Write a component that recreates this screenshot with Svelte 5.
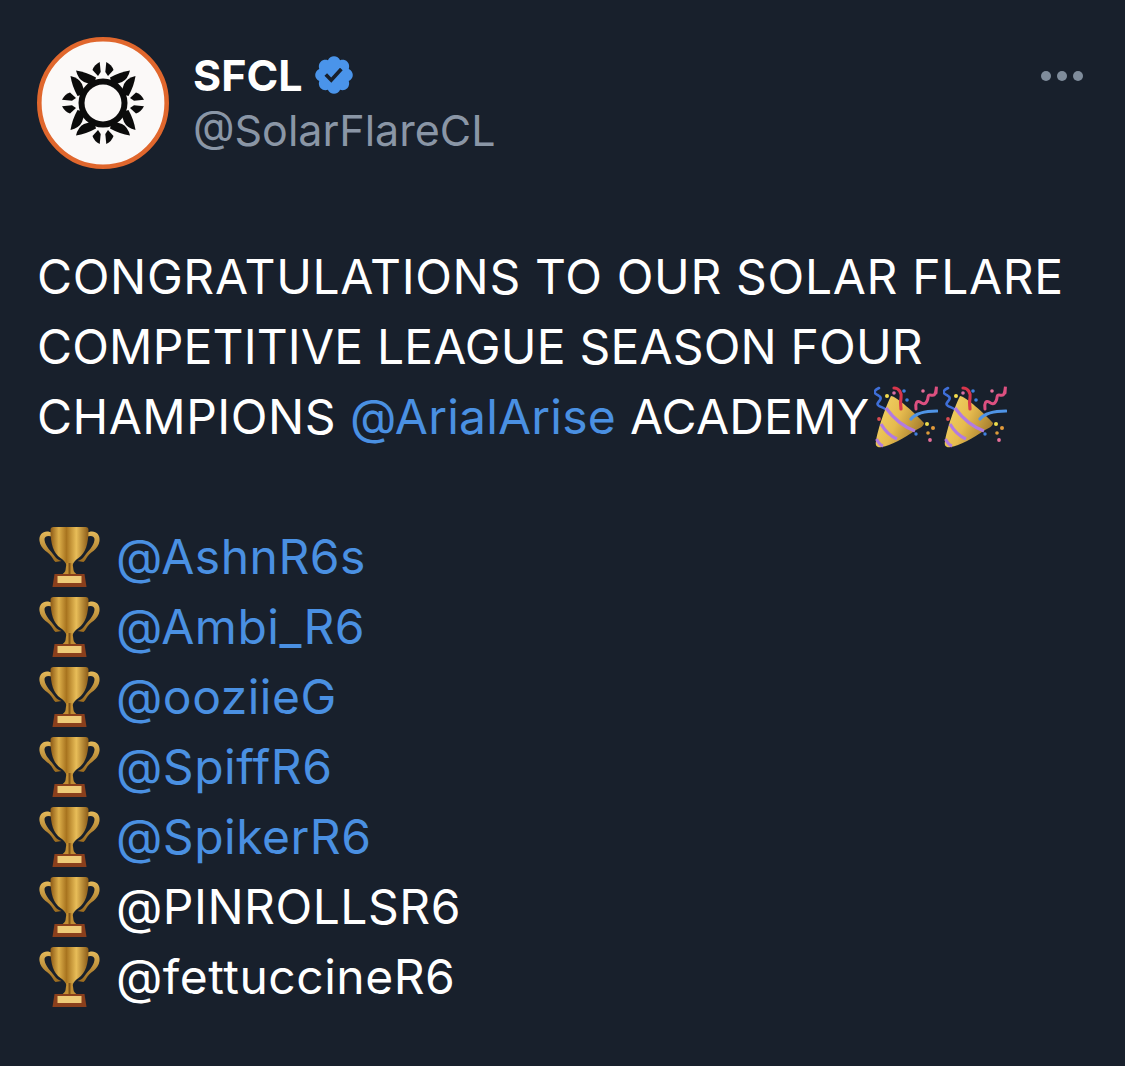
<script>
  const handles = [
    { t: '@AshnR6s', link: true },
    { t: '@Ambi_R6', link: true },
    { t: '@ooziieG', link: true },
    { t: '@SpiffR6', link: true },
    { t: '@SpikerR6', link: true },
    { t: '@PINROLLSR6', link: false },
    { t: '@fettuccineR6', link: false }
  ];
  const rot = [0, 90, 180, 270];
</script>

<svg class="defs" width="0" height="0" aria-hidden="true">
  <defs>
    <linearGradient id="gold" x1="0" x2="1" y1="0" y2="0">
      <stop offset="0" stop-color="#8d5a16" />
      <stop offset="0.22" stop-color="#dcae4a" />
      <stop offset="0.42" stop-color="#a8741f" />
      <stop offset="0.68" stop-color="#e8bd58" />
      <stop offset="1" stop-color="#8a5a18" />
    </linearGradient>
    <linearGradient id="handle" x1="0" x2="0" y1="0" y2="1">
      <stop offset="0" stop-color="#e4b95a" />
      <stop offset="1" stop-color="#9a6a1e" />
    </linearGradient>
    <linearGradient id="cone" x1="0" x2="1" y1="0" y2="0.5">
      <stop offset="0" stop-color="#f3d768" />
      <stop offset="0.55" stop-color="#e6bb4e" />
      <stop offset="1" stop-color="#a9812f" />
    </linearGradient>
    <symbol id="trophy" viewBox="0 0 64 64">
      <path d="M15 8C8 4 1 8 2 16c1 9 10 11 13 17 1 2 2 3 3 4l6-1c-3-1-5-2-7-5C13 25 8 22 7 15c-.5-4 4-5 8-3z" fill="url(#handle)" />
      <path d="M49 8c7-4 14 0 13 8-1 9-10 11-13 17-1 2-2 3-3 4l-6-1c3-1 5-2 7-5 4-6 9-9 10-16 .5-4-4-5-8-3z" fill="url(#handle)" />
      <path d="M16 2h32c2 0 3 1 3 3 0 14-3 23-10 28-3 2-5 4-6 7h-6c-1-3-3-5-6-7-7-5-10-14-10-28 0-2 1-3 3-3z" fill="url(#gold)" />
      <path d="M29 38h6l1 7c0 2 2 3 4 5H24c2-2 4-3 4-5z" fill="#c18d32" />
      <path d="M31 38h2v12h-2z" fill="#7f5217" />
      <path d="M17 49h30l2 13H15z" fill="#8a3f1c" />
      <path d="M20 51h24v7H20z" fill="#eecb78" />
    </symbol>
    <symbol id="popper" viewBox="0 0 64 64">
      <path d="M5 2C1 4-1 6 2 8s6 3 4 6-4 4-1 6 6 1 8 5" fill="none" stroke="#3f6fd8" stroke-width="2.6" stroke-linecap="round" />
      <path d="M17 10C22 10 42 28 50 37 50 40 46 42 42 44 30 52 16 60 8 61 3 62 1 60 2 55 4 42 12 20 17 10Z" fill="url(#cone)" />
      <path d="M12 22C20 33 30 41 41 45" fill="none" stroke="#b37be0" stroke-width="3.2" />
      <path d="M7 38C11 45 16 50 23 53" fill="none" stroke="#b37be0" stroke-width="3.2" />
      <path d="M2.5 53C4 56 6 59 9 60" fill="none" stroke="#b37be0" stroke-width="3" />
      <path d="M37 33C42 27 50 25 63 25" fill="none" stroke="#4f94e6" stroke-width="3.2" stroke-linecap="round" />
      <path d="M20 2C25 2 28 7 27 12s0 8 0 11" fill="none" stroke="#d9364c" stroke-width="3.2" stroke-linecap="round" />
      <path d="M42 23C41 17 43 14 46 16s5 3 7-1 0-6 3-6 5 2 6-5 0-1 0 3" fill="none" stroke="#dd5080" stroke-width="3" stroke-linecap="round" stroke-linejoin="round" />
      <circle cx="13" cy="10" r="2" fill="#f5dc4d" />
      <circle cx="20" cy="7" r="1.8" fill="#d86fa6" />
      <circle cx="30" cy="5" r="1.8" fill="#3f80e0" />
      <circle cx="33" cy="14" r="1.8" fill="#3f80e0" />
      <circle cx="49" cy="5" r="1.8" fill="#e76f9a" />
      <circle cx="5" cy="33" r="1.9" fill="#d94b52" />
      <circle cx="53" cy="38" r="2" fill="#ecdd4e" />
      <circle cx="59" cy="42" r="2" fill="#e39a3a" />
      <circle cx="42" cy="48" r="1.7" fill="#3f80e0" />
      <circle cx="54" cy="47" r="1.8" fill="#dc9c3a" />
      <circle cx="56" cy="54" r="1.9" fill="#e76f9a" />
    </symbol>
  </defs>
</svg>

<main class="tweet">
  <header class="head">
    <svg class="avatar" viewBox="-66 -66 132 132" aria-label="SFCL logo">
      <circle r="63.7" fill="#fbf9f8" stroke="#e0672d" stroke-width="4.6" />
      <g fill="#0b0b0b">
        <circle r="24.5" />
        {#each rot as r}
          <g transform="rotate({r})">
            <path d="M3.3-41Q9-38 10.5-33L5-27 2.3-31Z" />
            <path d="M-3.3-41Q-9-38-10.5-33L-5-27-2.3-31Z" />
            <path d="M7-25.5Q17-31 27-32.5 25-24 19-21 14-19 9-18.5Z" />
            <path d="M-7-25.5Q-17-31-27-32.5-25-24-19-21-14-19-9-18.5Z" />
          </g>
        {/each}
      </g>
      <circle r="18.5" fill="#fbf9f8" />
    </svg>
    <div class="who">
      <div class="name">SFCL
        <svg class="badge" viewBox="0 0 24 24"><path fill="#4a94ea" d="M22.25 12c0-1.43-.88-2.67-2.19-3.34.46-1.39.2-2.9-.81-3.91s-2.52-1.27-3.91-.81c-.66-1.31-1.91-2.19-3.34-2.19s-2.67.88-3.33 2.19c-1.4-.46-2.91-.2-3.92.81s-1.26 2.52-.8 3.91c-1.31.67-2.2 1.91-2.2 3.34s.89 2.67 2.2 3.34c-.46 1.39-.21 2.9.8 3.91s2.52 1.26 3.91.81c.67 1.31 1.91 2.19 3.34 2.19s2.68-.88 3.34-2.19c1.39.45 2.9.2 3.91-.81s1.27-2.52.81-3.91c1.31-.67 2.19-1.91 2.19-3.34zm-11.71 4.2L6.8 12.46l1.41-1.42 2.26 2.26 4.8-5.23 1.47 1.36-6.2 6.77z" /></svg>
      </div>
      <div class="handle">@SolarFlareCL</div>
    </div>
    <div class="more" aria-label="More"><i></i><i></i><i></i></div>
  </header>

  <section class="body">
    <p class="wide">CONGRATULATIONS TO OUR SOLAR FLARE</p>
    <p class="tight">COMPETITIVE LEAGUE SEASON FOUR</p>
    <p>CHAMPIONS <span class="link snug">@ArialArise</span> <span class="snug academy">ACADEMY</span><svg class="emoji party"><use href="#popper" /></svg><svg class="emoji party"><use href="#popper" /></svg></p>
    <p class="blank">&nbsp;</p>
    {#each handles as h}
      <p class="row"><svg class="emoji cup"><use href="#trophy" /></svg><span class:link={h.link}>{h.t}</span></p>
    {/each}
  </section>
</main>

<style>
  :global(body) {
    background: #18202c;
    margin: 0;
  }
  .defs {
    position: absolute;
  }
  .tweet {
    box-sizing: border-box;
    width: 1125px;
    height: 1066px;
    background: #18202c;
    padding: 37px 42px 0 37px;
    font-family: Inter, "Liberation Sans", sans-serif;
    color: #fff;
    overflow: hidden;
  }
  .head {
    display: flex;
    align-items: flex-start;
    height: 132px;
  }
  .avatar {
    width: 132px;
    height: 132px;
    flex: none;
  }
  .who {
    margin-left: 24px;
    padding-top: 8px;
    flex: 1;
  }
  .name {
    display: flex;
    align-items: center;
    gap: 9px;
    font-size: 43px;
    font-weight: 700;
    line-height: 60px;
  }
  .badge {
    width: 44px;
    height: 44px;
  }
  .handle {
    font-size: 43px;
    line-height: 50px;
    color: #8a96a6;
  }
  .more {
    display: flex;
    gap: 6px;
    padding-top: 34px;
  }
  .more i {
    width: 10px;
    height: 10px;
    border-radius: 50%;
    background: #7f8c9b;
  }
  .body {
    margin-top: 73px;
  }
  p {
    margin: 0;
    height: 70px;
    line-height: 70px;
    font-size: 48px;
    letter-spacing: 0.5px;
    white-space: nowrap;
  }
  .wide {
    letter-spacing: 0.65px;
  }
  .tight {
    letter-spacing: 0.17px;
  }
  .snug {
    letter-spacing: 0.2px;
  }
  .academy {
    margin-right: 5px;
  }
  .link {
    color: #4a90e2;
  }
  .emoji {
    vertical-align: middle;
  }
  .party {
    width: 64px;
    height: 64px;
    margin-top: -6px;
    margin-right: 5px;
  }
  .row {
    display: flex;
    align-items: center;
    gap: 14px;
  }
  .cup {
    width: 65px;
    height: 64px;
    flex: none;
  }
</style>
